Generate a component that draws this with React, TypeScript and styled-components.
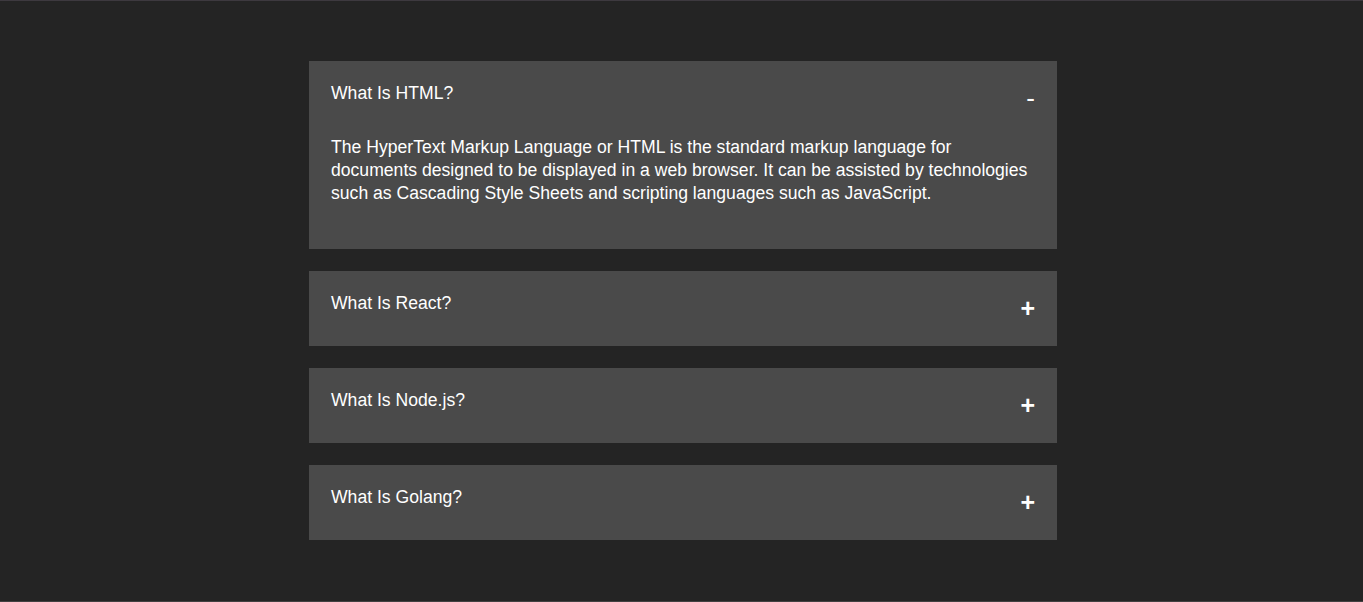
import React, { useState } from "react";
import styled, { createGlobalStyle } from "styled-components";

const GlobalStyle = createGlobalStyle`
  html, body {
    margin: 0;
    padding: 0;
    background: #242424;
  }
  body {
    font-family: "Liberation Sans", Arial, sans-serif;
    color: #ffffff;
  }
  * { box-sizing: border-box; }
`;

const Page = styled.div`
  min-height: 602px;
  border-top: 1px solid #3d393f;
  border-bottom: 1px solid #414141;
  padding: 60px 0 0 3px;
  display: flex;
  justify-content: center;
  align-items: flex-start;
`;

const Accordion = styled.div`
  width: 748px;
  display: flex;
  flex-direction: column;
  gap: 22px;
`;

const Item = styled.div`
  background: #4a4a4a;
  padding: 0 22px 0 22px;
`;

const Header = styled.div`
  height: 75px;
  padding-top: 22px;
  display: flex;
  justify-content: space-between;
  align-items: flex-start;
  cursor: pointer;
`;

const Title = styled.div`
  font-size: 17.6px;
  line-height: 20px;
`;

const Icon = styled.span<{ $open: boolean }>`
  font-size: ${(p) => (p.$open ? "26px" : "25px")};
  font-weight: ${(p) => (p.$open ? 400 : 700)};
  line-height: 28px;
  margin-top: 1px;
`;

const Body = styled.div`
  font-size: 17.6px;
  line-height: 23px;
  padding-bottom: 44px;
`;

const data = [
  {
    q: "What Is HTML?",
    a: "The HyperText Markup Language or HTML is the standard markup language for documents designed to be displayed in a web browser. It can be assisted by technologies such as Cascading Style Sheets and scripting languages such as JavaScript.",
  },
  {
    q: "What Is React?",
    a: "React is a free and open-source front-end JavaScript library for building user interfaces based on components.",
  },
  {
    q: "What Is Node.js?",
    a: "Node.js is a cross-platform, open-source JavaScript runtime environment.",
  },
  {
    q: "What Is Golang?",
    a: "Go is a statically typed, compiled high-level programming language designed at Google.",
  },
];

export default function App() {
  const [open, setOpen] = useState<number | null>(0);
  return (
    <>
      <GlobalStyle />
      <Page>
        <Accordion>
          {data.map((d, i) => (
            <Item key={d.q}>
              <Header onClick={() => setOpen(open === i ? null : i)}>
                <Title>{d.q}</Title>
                <Icon $open={open === i}>{open === i ? "-" : "+"}</Icon>
              </Header>
              {open === i && <Body>{d.a}</Body>}
            </Item>
          ))}
        </Accordion>
      </Page>
    </>
  );
}
